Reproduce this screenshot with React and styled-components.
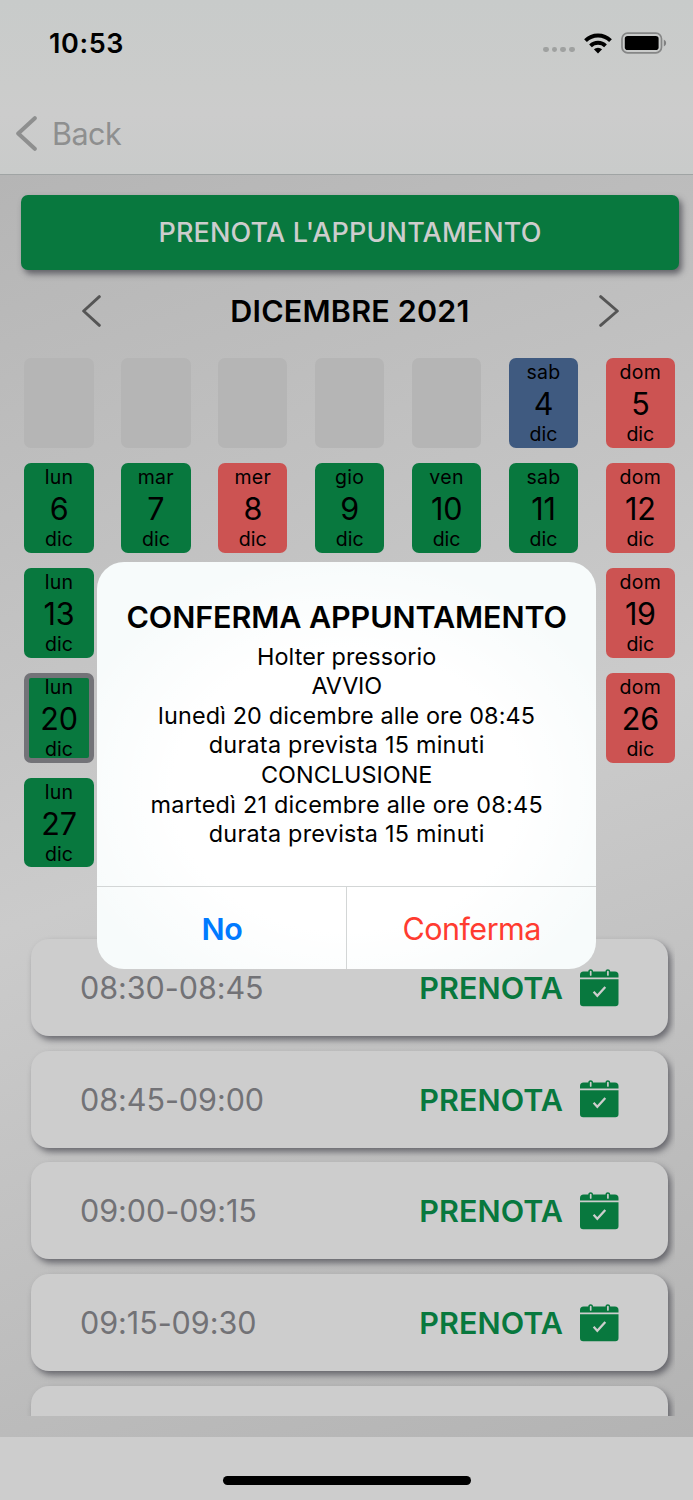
import React from "react";
import styled, { createGlobalStyle } from "styled-components";

const GlobalStyle = createGlobalStyle`
  * { box-sizing: border-box; }
  body { margin: 0; background: #cdcdcd; font-family: Inter, "Liberation Sans", sans-serif; }
  button { font-family: inherit; border: 0; background: none; padding: 0; margin: 0; }
  svg { display: block; flex: none; }
`;

const GREEN = "#08783e";
const DAY_COLORS = {
  open: GREEN,
  closed: "#cc5352",
  today: "#3f5a80",
  empty: "#b5b5b5",
};

const Screen = styled.div`
  position: relative;
  width: 693px;
  height: 1500px;
  overflow: hidden;
  display: flex;
  flex-direction: column;
  color: #000;
`;

const Header = styled.header`
  height: 175px;
  flex: none;
  border-bottom: 1px solid #a0a4a4;
  background: linear-gradient(180deg, #c8cbca 0%, #cbcccb 50%, #cccccc 65%, #c9cbca 100%);
`;

const StatusBar = styled.div`
  height: 86px;
  padding: 0 26px 0 49px;
  display: flex;
  align-items: center;
  justify-content: space-between;
`;

const Clock = styled.div`
  font-size: 27px;
  font-weight: 600;
  letter-spacing: 0.6px;
`;

const StatusIcons = styled.div`
  display: flex;
  align-items: center;
`;

const SignalDots = styled.div`
  display: flex;
  gap: 3px;
  padding-top: 13px;
  margin-right: 9px;
`;

const Dot = styled.span`
  width: 5.8px;
  height: 5.8px;
  border-radius: 2.4px;
  background: #9fa1a0;
`;

const NavBar = styled.nav`
  height: 88px;
  padding: 3px 0 0 16px;
  display: flex;
  align-items: flex-start;
`;

const BackButton = styled.button`
  height: 88px;
  display: flex;
  align-items: center;
  gap: 15px;
  font-size: 30.5px;
  letter-spacing: -0.5px;
  color: #8e8f8f;
`;

const Content = styled.main`
  height: 1262px;
  flex: none;
  display: flex;
  flex-direction: column;
  background: linear-gradient(160deg, #b5b5b5 0%, #cbcbcb 50%, #b3b3b3 100%);
`;

const BookButton = styled.button`
  flex: none;
  height: 75.5px;
  margin: 19.8px 14px 0 21px;
  border-radius: 7px;
  background: ${GREEN};
  color: #cdcdcd;
  font-size: 27px;
  font-weight: 550;
  letter-spacing: 0.16px;
  box-shadow: 3px 4px 6px rgba(60, 60, 68, 0.7);
`;

const MonthBar = styled.div`
  flex: none;
  height: 81px;
  padding: 0 74px 0 82px;
  display: flex;
  align-items: center;
  justify-content: space-between;
`;

const MonthTitle = styled.h2`
  margin: 0;
  font-size: 30.5px;
  font-weight: 570;
  letter-spacing: 0.2px;
`;

const Calendar = styled.div`
  flex: none;
  height: 509px;
  margin-top: 7.2px;
  padding-left: 24.3px;
  display: grid;
  grid-template-columns: repeat(7, 69.4px);
  grid-auto-rows: 89.8px;
  gap: 15px 27.5px;
`;

const Day = styled.div`
  grid-column: ${(p) => p.$col};
  grid-row: ${(p) => p.$row};
  overflow: hidden;
  display: flex;
  flex-direction: column;
  border-radius: 7px;
  text-align: center;
  background: ${(p) => DAY_COLORS[p.$kind]};
  border: ${(p) => (p.$selected ? "5.6px solid #737378" : "0 solid transparent")};
`;

const DayText = styled.div`
  display: flex;
  flex-direction: column;
  margin-top: ${(p) => (p.$selected ? "-5px" : "0")};
`;

const DayLabel = styled.span`
  height: 28px;
  line-height: 28px;
  font-size: 19.5px;
  letter-spacing: 0.3px;
`;

const DayNumber = styled.span`
  height: 36px;
  line-height: 36px;
  font-size: 30.5px;
  letter-spacing: -0.2px;
`;

const MonthLabel = styled.span`
  height: 24px;
  line-height: 24px;
  font-size: 19.5px;
  letter-spacing: 0;
`;

const SlotList = styled.div`
  flex: none;
  height: 549px;
  margin-left: 20px;
  width: 655px;
  overflow: hidden;
  padding: 71.8px 7px 0 11px;
  display: flex;
  flex-direction: column;
  gap: 14.6px;
`;

const Slot = styled.div`
  flex: none;
  height: 97px;
  border-radius: 18px;
  padding: 0 49.5px 0 49px;
  display: flex;
  align-items: center;
  background: #cdcdcd;
  box-shadow: 3px 4px 6px rgba(60, 60, 70, 0.66);
`;

const SlotTime = styled.span`
  flex: 1;
  font-size: 30.5px;
  letter-spacing: -0.05px;
  color: #727276;
`;

const SlotAction = styled.button`
  display: flex;
  align-items: center;
  gap: 17px;
  font-size: 30.5px;
  font-weight: 570;
  letter-spacing: 0.05px;
  color: ${GREEN};
`;

const Footer = styled.footer`
  flex: 1;
  padding-top: 23.6px;
  display: flex;
  justify-content: center;
  align-items: center;
  background: #cdcdcd;
`;

const HomeIndicator = styled.div`
  width: 248px;
  height: 9px;
  border-radius: 5px;
  background: #000;
`;

const Dialog = styled.section`
  position: absolute;
  left: 97.4px;
  top: 561.5px;
  width: 498.6px;
  height: 407px;
  border-radius: 27px;
  overflow: hidden;
  display: flex;
  flex-direction: column;
  background:
    radial-gradient(ellipse 58% 58% at 50% 56%, #fff 60%, rgba(255, 255, 255, 0) 100%),
    #f7fbfb;
  text-align: center;
`;

const DialogTitle = styled.h1`
  margin: 35.5px 0 4.7px;
  line-height: 40px;
  font-size: 30.5px;
  font-weight: 580;
  letter-spacing: -0.1px;
`;

const DialogLine = styled.p`
  margin: 0;
  line-height: 29.6px;
  font-size: 23.4px;
  letter-spacing: ${(p) => p.$spacing}px;
`;

const DialogActions = styled.div`
  height: 82.5px;
  margin-top: auto;
  display: grid;
  grid-template-columns: 249px 1fr;
  border-top: 1px solid #d3d6d6;
`;

const DialogButton = styled.button`
  padding-top: 1.4px;
  font-size: 30.5px;
  font-weight: ${(p) => (p.$primary ? 600 : 400)};
  letter-spacing: -0.5px;
  color: ${(p) => (p.$primary ? "#007aff" : "#ff3b30")};
  border-left: ${(p) => (p.$primary ? "0" : "1px solid #d3d6d6")};
`;

const IconGap = styled.span`
  width: 9px;
`;

function Chevron({ width, height, stroke, color, right }) {
  const p = stroke / 2 + 0.2;
  const a = right ? p : width - p;
  const b = right ? width - p : p;
  return (
    <svg width={width} height={height}>
      <path
        d={`M${a} ${p}L${b} ${height / 2}L${a} ${height - p}`}
        fill="none"
        stroke={color}
        strokeWidth={stroke}
        strokeLinecap="round"
        strokeLinejoin="round"
      />
    </svg>
  );
}

function WifiIcon() {
  return (
    <svg width="28" height="21" viewBox="0 0 28 21">
      <g fill="none" stroke="#000" strokeWidth="3.9">
        <path d="M1.5 7.6A17.8 17.8 0 0 1 26.5 7.6" />
        <path d="M6.5 12.8A10.8 10.8 0 0 1 21.5 12.8" />
      </g>
      <path d="M14 20.4L9.9 16.3A5.9 5.9 0 0 1 18.1 16.3Z" />
    </svg>
  );
}

function BatteryIcon() {
  return (
    <svg width="46" height="22" viewBox="0 0 46 22">
      <rect x="1" y="1.2" width="39.5" height="19.6" rx="5.6" fill="none" stroke="#858686" strokeWidth="1.7" />
      <rect x="3.8" y="4" width="33.8" height="14" rx="2.8" />
      <path d="M42.8 7.4Q45.2 8.4 45.2 11T42.8 14.6Z" fill="#808181" />
    </svg>
  );
}

function CalendarCheckIcon() {
  return (
    <svg width="38.5" height="38" viewBox="0 0 38.5 38">
      <path
        fill={GREEN}
        d="M0 8.6V6Q0 2.4 3.6 2.4H8.3C8.3-.5 13-.5 13 2.4H25.5C25.5-.5 30.2-.5 30.2 2.4H34.9Q38.5 2.4 38.5 6V8.6Z"
      />
      <path fill={GREEN} d="M0 10.3H38.5V34Q38.5 37.2 35.3 37.2H3.2Q0 37.2 0 34Z" />
      <path d="M10.7 2.6V6M27.9 2.6V6" stroke="#cdcdcd" strokeWidth="1.7" strokeLinecap="round" />
      <path d="M13.6 22.8L17.3 26.7L25.3 18" fill="none" stroke="#cdcdcd" strokeWidth="2.3" />
    </svg>
  );
}

const NAMES = ["lun", "mar", "mer", "gio", "ven", "sab", "dom"];
const day = (number, row, col, kind, selected) => ({ number, row, col, kind, selected });
const DAYS = [
  ...[1, 2, 3, 4, 5].map((col) => day(null, 1, col, "empty")),
  day(4, 1, 6, "today"),
  day(5, 1, 7, "closed"),
  day(6, 2, 1, "open"),
  day(7, 2, 2, "open"),
  day(8, 2, 3, "closed"),
  day(9, 2, 4, "open"),
  day(10, 2, 5, "open"),
  day(11, 2, 6, "open"),
  day(12, 2, 7, "closed"),
  day(13, 3, 1, "open"),
  day(19, 3, 7, "closed"),
  day(20, 4, 1, "open", true),
  day(26, 4, 7, "closed"),
  day(27, 5, 1, "open"),
];

const SLOTS = ["08:30-08:45", "08:45-09:00", "09:00-09:15", "09:15-09:30"];

const LINES = [
  ["Holter pressorio", 0.11],
  ["AVVIO", -0.2],
  ["lunedì 20 dicembre alle ore 08:45", 0.15],
  ["durata prevista 15 minuti", 0.25],
  ["CONCLUSIONE", 0.02],
  ["martedì 21 dicembre alle ore 08:45", 0.25],
  ["durata prevista 15 minuti", 0.25],
];

export default function App() {
  return (
    <Screen>
      <GlobalStyle />
      <Header>
        <StatusBar>
          <Clock>10:53</Clock>
          <StatusIcons>
            <SignalDots>
              <Dot />
              <Dot />
              <Dot />
              <Dot />
            </SignalDots>
            <WifiIcon />
            <IconGap />
            <BatteryIcon />
          </StatusIcons>
        </StatusBar>
        <NavBar>
          <BackButton>
            <Chevron width={21} height={35} stroke={4} color="#8e8f8f" />
            Back
          </BackButton>
        </NavBar>
      </Header>

      <Content>
        <BookButton>PRENOTA L'APPUNTAMENTO</BookButton>
        <MonthBar>
          <Chevron width={19} height={32} stroke={2.9} color="#555" />
          <MonthTitle>DICEMBRE 2021</MonthTitle>
          <Chevron width={20} height={32} stroke={2.9} color="#555" right />
        </MonthBar>
        <Calendar>
          {DAYS.map((d) => (
            <Day key={`${d.row}-${d.col}`} $row={d.row} $col={d.col} $kind={d.kind} $selected={d.selected}>
              {d.number && (
                <DayText $selected={d.selected}>
                  <DayLabel>{NAMES[d.col - 1]}</DayLabel>
                  <DayNumber>{d.number}</DayNumber>
                  <MonthLabel>dic</MonthLabel>
                </DayText>
              )}
            </Day>
          ))}
        </Calendar>
        <SlotList>
          {SLOTS.map((time) => (
            <Slot key={time}>
              <SlotTime>{time}</SlotTime>
              <SlotAction>
                PRENOTA
                <CalendarCheckIcon />
              </SlotAction>
            </Slot>
          ))}
          <Slot />
        </SlotList>
      </Content>

      <Footer>
        <HomeIndicator />
      </Footer>

      <Dialog>
        <DialogTitle>CONFERMA APPUNTAMENTO</DialogTitle>
        {LINES.map(([text, spacing], i) => (
          <DialogLine key={i} $spacing={spacing}>
            {text}
          </DialogLine>
        ))}
        <DialogActions>
          <DialogButton $primary>No</DialogButton>
          <DialogButton>Conferma</DialogButton>
        </DialogActions>
      </Dialog>
    </Screen>
  );
}
